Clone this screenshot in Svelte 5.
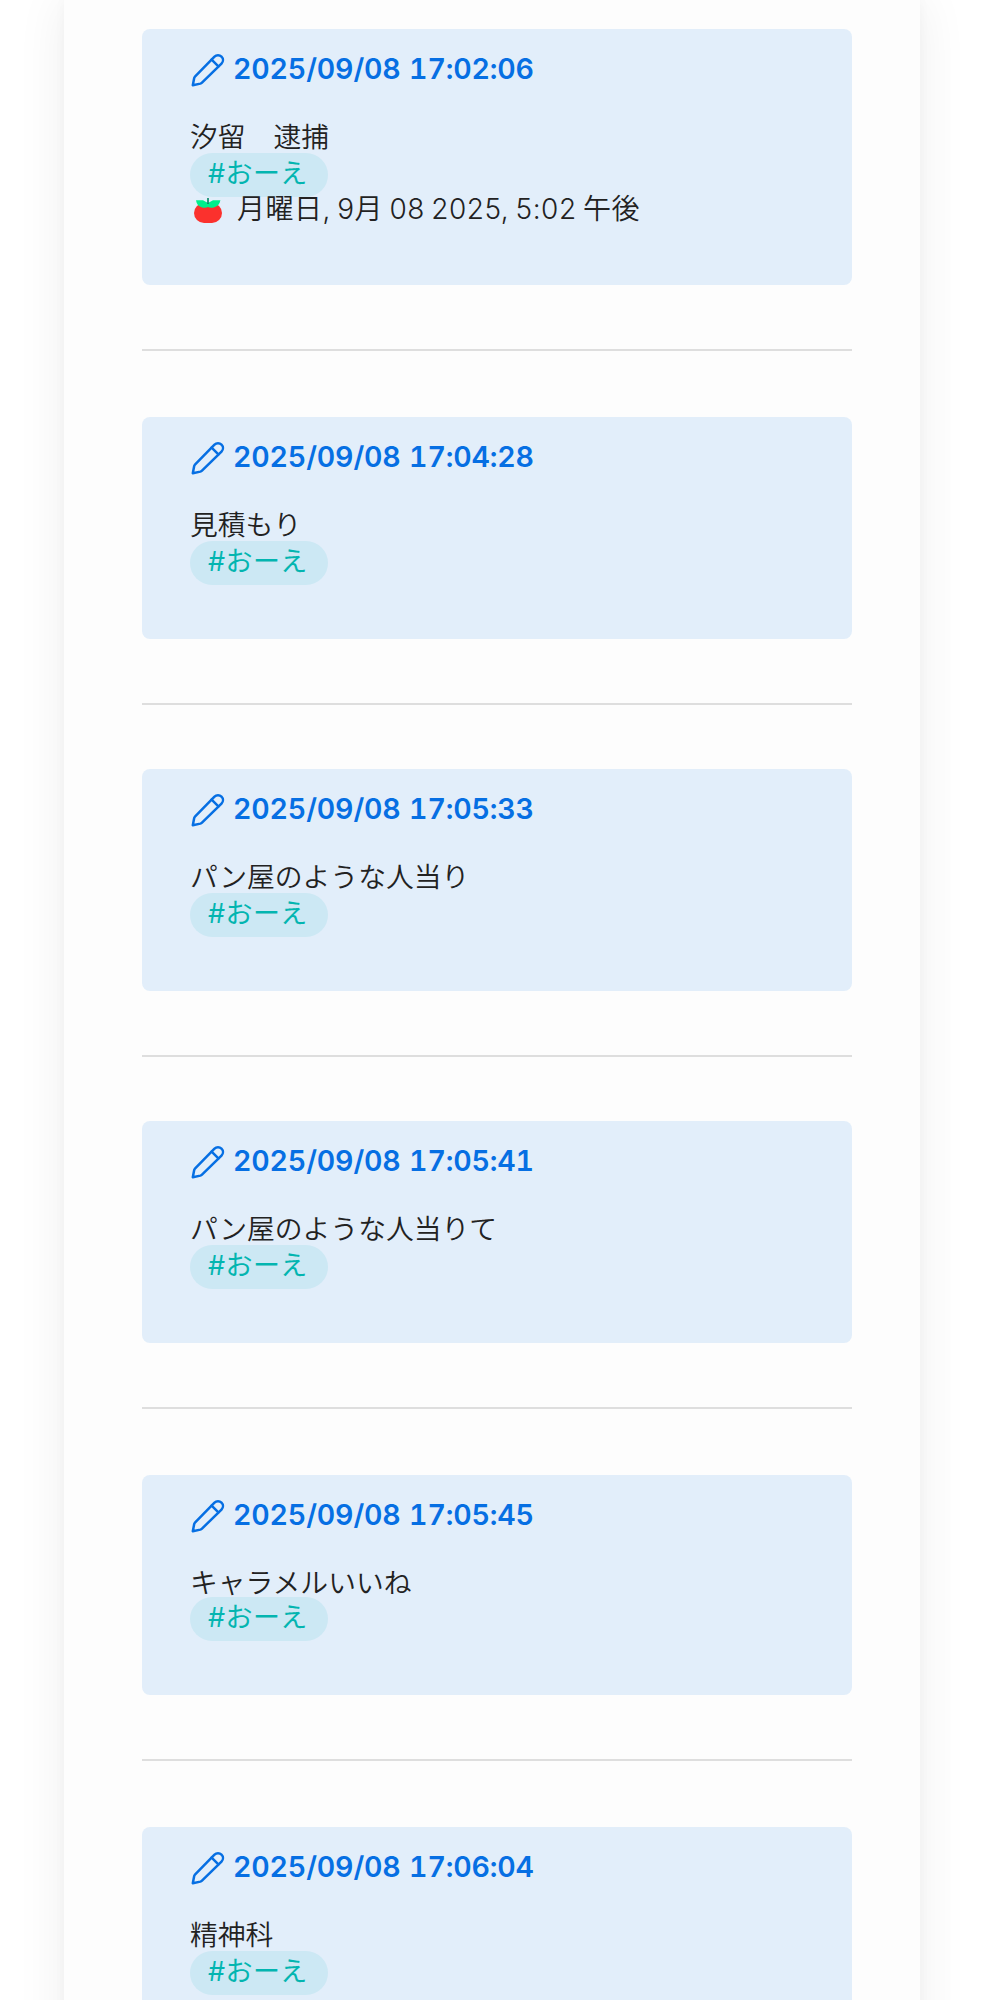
<script lang="ts">
  interface Memo {
    time: string;
    text: string;
    tag: string;
    footer?: string;
  }

  const memos: Memo[] = [
    {
      time: '2025/09/08 17:02:06',
      text: '汐留　逮捕',
      tag: '#おーえ',
      footer: '月曜日, 9月 08 2025, 5:02 午後',
    },
    { time: '2025/09/08 17:04:28', text: '見積もり', tag: '#おーえ' },
    { time: '2025/09/08 17:05:33', text: 'パン屋のような人当り', tag: '#おーえ' },
    { time: '2025/09/08 17:05:41', text: 'パン屋のような人当りて', tag: '#おーえ' },
    { time: '2025/09/08 17:05:45', text: 'キャラメルいいね', tag: '#おーえ' },
    { time: '2025/09/08 17:06:04', text: '精神科', tag: '#おーえ' },
  ];
</script>

<main class="page">
  {#each memos as memo, i}
    {#if i > 0}
      <hr />
    {/if}
    <article class="memo" class:with-footer={memo.footer}>
      <h2 class="memo-title">
        <svg class="pencil" viewBox="0 0 34 34" aria-hidden="true">
          <path d="M1.8 32.2 3.2 25.1Q3.4 24.1 4.2 23.3L23.5 3.6a4.9 4.9 0 0 1 7 7L11 29.6Q10.3 30.3 9.3 30.6Z" />
          <path d="m20.6 6.6 6.8 6.8" />
        </svg>
        <span class="time">{memo.time}</span>
      </h2>
      <p class="text">{memo.text}</p>
      <div class="tag-row"><span class="tag">{memo.tag}</span></div>
      {#if memo.footer}
        <p class="footer">
          <svg class="tomato" viewBox="0 0 28 25" aria-hidden="true">
            <rect x="0" y="5" width="28" height="20" rx="10" fill="#fb312d" />
            <path d="M2 2.3h7L14 5l5-2.7h7.4c-.6 3.2-2.2 5.5-4.4 6.2-2 1.3-6 1.7-8 .5-2 1.2-6 .8-8-.5C4 7.8 2.5 5.5 2 2.3Z" fill="#00ef8b" />
            <path d="M13.2 0h1.6v6h-1.6z" fill="#008463" />
          </svg>
          <span class="date">{memo.footer}</span>
        </p>
      {/if}
    </article>
  {/each}
</main>

<style>
  :global(body) {
    background: #fff;
  }

  :global(#app) {
    height: 2000px;
    overflow: hidden;
  }

  .page {
    box-sizing: border-box;
    width: 856px;
    height: 2200px;
    margin-left: 64px;
    padding: 29px 68px 0 78px;
    background: #fdfdfd;
    box-shadow:
      0 0 48px rgba(0, 0, 0, 0.07),
      0 0 12px rgba(0, 0, 0, 0.03);
    color: #222;
    font-family: Inter, 'Noto Sans CJK JP', sans-serif;
    font-size: 28px;
    font-weight: 350;
  }

  .memo {
    box-sizing: border-box;
    height: 222px;
    padding: 19px 48px 0;
    border-radius: 8px;
    background: #e2eefa;
  }

  .memo.with-footer {
    height: 256px;
  }

  .memo:nth-of-type(5) {
    height: 220px;
  }

  .memo:nth-of-type(5) .text {
    height: 34px;
  }

  hr {
    height: 2px;
    margin: 64px 0;
    border: 0;
    background: #dedede;
  }

  hr:nth-of-type(1),
  hr:nth-of-type(4),
  hr:nth-of-type(5) {
    margin-bottom: 66px;
  }

  .memo-title {
    display: flex;
    align-items: center;
    gap: 8px;
    height: 40px;
    margin: 0;
    color: #066fe3;
    font-size: 28.5px;
    font-weight: 600;
  }

  .pencil {
    width: 34px;
    height: 34px;
    margin: 4px 0 0 1px;
    fill: none;
    stroke: currentColor;
    stroke-width: 2.5;
    stroke-linejoin: round;
    stroke-linecap: round;
  }

  .time {
    font-variant-numeric: tabular-nums;
    letter-spacing: -0.15px;
    word-spacing: 1px;
    white-space: nowrap;
  }

  .text {
    height: 36px;
    margin: 29px 0 0;
    font-size: 27.8px;
    line-height: 40px;
    white-space: nowrap;
  }

  .tag-row {
    display: flex;
    height: 44px;
  }

  .tag {
    box-sizing: border-box;
    width: 138px;
    height: 44px;
    padding-left: 18px;
    border-radius: 22px;
    background: #cce8f4;
    color: #03b5b0;
    font-size: 27px;
    font-weight: 400;
    letter-spacing: 0.4px;
    line-height: 42px;
    white-space: nowrap;
  }

  .footer {
    display: flex;
    align-items: center;
    gap: 15px;
    height: 34px;
    margin: -7px 0 0 4px;
    white-space: nowrap;
  }

  .tomato {
    width: 28px;
    height: 25px;
    margin-top: 6px;
  }

  .date {
    font-size: 28px;
    letter-spacing: 0.5px;
    word-spacing: -2px;
  }
</style>
